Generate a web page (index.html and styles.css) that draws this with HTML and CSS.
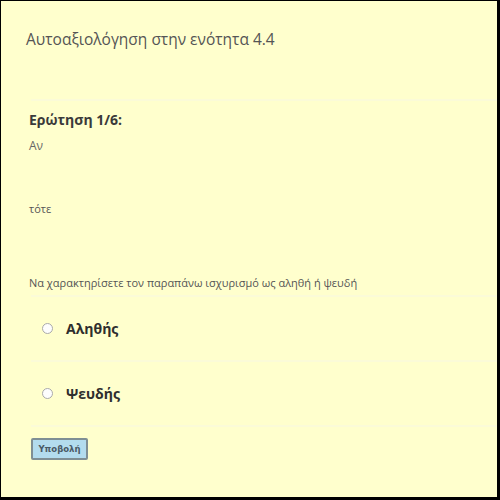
FILE: index.html
```html
<!DOCTYPE html>
<html lang="el">
<head>
<meta charset="utf-8">
<title>Αυτοαξιολόγηση</title>
<link rel="stylesheet" href="styles.css">
</head>
<body>
<div class="frame">
  <h1 class="title">Αυτοαξιολόγηση στην ενότητα 4.4</h1>
  <div class="sep"></div>
  <div class="question">
    <div class="qhead">Ερώτηση 1/6:</div>
    <div class="line-if">Αν</div>
    <div class="line-then">τότε</div>
    <div class="instr">Να χαρακτηρίσετε τον παραπάνω ισχυρισμό ως αληθή ή ψευδή</div>
  </div>
  <div class="sep"></div>
  <label class="option">
    <span class="radio"></span>
    <span class="opt-label">Αληθής</span>
  </label>
  <div class="sep"></div>
  <label class="option">
    <span class="radio"></span>
    <span class="opt-label">Ψευδής</span>
  </label>
  <div class="sep"></div>
  <div class="actions">
    <button class="submit" type="button">Υποβολή</button>
  </div>
</div>
</body>
</html>
```

FILE: styles.css
```css
html, body {
  margin: 0;
  padding: 0;
  background: #000;
}
.frame {
  box-sizing: border-box;
  width: 500px;
  height: 500px;
  border-top: 1px solid #000;
  border-left: 1px solid #000;
  border-right: 3px solid #000;
  border-bottom: 3px solid #000;
  background: #ffffcd;
  font-family: "Open Sans", "DejaVu Sans", sans-serif;
  color: #555;
  display: flex;
  flex-direction: column;
}
.title {
  margin: 27px 0 0 25px;
  font-size: 15.5px;
  font-weight: normal;
  line-height: 22px;
  color: #555;
  height: 71px;
}
.sep {
  margin-left: 30px;
  height: 2px;
  background: #fbfbd8;
}
.question {
  padding-left: 28px;
  display: flex;
  flex-direction: column;
}
.qhead {
  margin-top: 10px;
  font-weight: bold;
  font-size: 14px;
  line-height: 18px;
  color: #3a3a3a;
}
.line-if {
  margin-top: 9px;
  font-size: 12px;
  line-height: 16px;
  color: #666;
}
.line-then {
  margin-top: 47px;
  font-size: 11px;
  line-height: 16px;
  color: #555;
}
.instr {
  margin-top: 58px;
  font-size: 11px;
  line-height: 16px;
  color: #555;
  height: 20px;
}
.option {
  height: 63px;
  display: flex;
  align-items: center;
  padding-left: 41px;
  gap: 13px;
}
.radio {
  width: 9px;
  height: 9px;
  border: 1.5px solid #aaa;
  border-radius: 50%;
  background: #fdfdfd;
}
.opt-label {
  font-size: 14px;
  font-weight: bold;
  color: #2e2e2e;
}
.actions {
  padding: 8px 0 0 30px;
}
.submit {
  width: 57px;
  height: 22px;
  padding: 0;
  background: #b3dcee;
  border: 2px solid #7f8f94;
  border-radius: 2px;
  font-family: "DejaVu Sans", sans-serif;
  font-size: 8.5px;
  font-weight: bold;
  color: #4a5a66;
}
```
